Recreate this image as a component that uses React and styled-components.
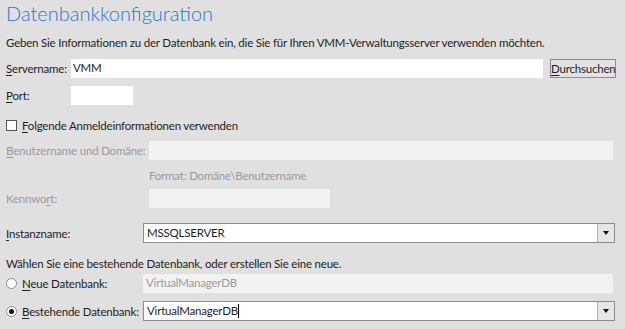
import React from 'react';
import styled, { createGlobalStyle } from 'styled-components';

const Global = createGlobalStyle`
  html, body {
    margin: 0;
    padding: 0;
    background: #e0e0e0;
  }
  body {
    font-family: Lato, "Liberation Sans", sans-serif;
    font-size: 11.5px;
    letter-spacing: -0.2px;
    color: #1e1e1e;
  }
`;

const Page = styled.div`
  width: 625px;
  height: 329px;
  padding: 0 0 0 6px;
  box-sizing: border-box;
  overflow: hidden;
`;

const Title = styled.h1`
  margin: 0;
  height: 30px;
  font-family: Lato, sans-serif;
  font-weight: 300;
  font-size: 20px;
  letter-spacing: 0;
  line-height: 26px;
  color: #2b78cf;
`;

const Text = styled.div`
  height: ${p => p.$h || 16}px;
  margin-top: ${p => p.$top || 0}px;
  line-height: 16px;
  padding-left: ${p => p.$indent || 0}px;
  color: ${p => (p.$muted ? '#9a9a9a' : '#1e1e1e')};
  white-space: nowrap;
`;

const Row = styled.div`
  display: flex;
  align-items: center;
  height: ${p => p.$h || 19}px;
  margin-top: ${p => p.$top || 0}px;
`;

const Label = styled.label`
  width: ${p => p.$w}px;
  flex: none;
  color: ${p => (p.$disabled ? '#9a9a9a' : '#1e1e1e')};
  white-space: nowrap;
  display: flex;
  align-items: center;
  gap: 5px;
`;

const Key = styled.span`
  text-decoration: underline;
  text-underline-offset: 2px;
`;

const Input = styled.div`
  width: ${p => p.$w}px;
  height: 19px;
  box-sizing: border-box;
  background: ${p => (p.$disabled ? '#f2f2f2' : '#ffffff')};
  color: ${p => (p.$disabled ? '#9a9a9a' : '#1e1e1e')};
  padding-left: ${p => (p.$disabled ? 3 : 2)}px;
  line-height: 18px;
  white-space: nowrap;
`;

const Button = styled.button`
  margin-left: 7px;
  width: 66px;
  height: 19px;
  padding: 0;
  box-sizing: border-box;
  border: 1px solid #8c8c8c;
  background: #e3e3e3;
  font: inherit;
  letter-spacing: inherit;
  color: #1e1e1e;
  line-height: 16px;
  text-align: center;
`;

const Select = styled.div`
  display: flex;
  width: 472px;
  height: 20px;
  box-sizing: border-box;
  border: 1px solid #8c8c8c;
  background: #fff;
`;

const SelectValue = styled.div`
  flex: 1;
  padding-left: 3px;
  line-height: 18px;
  white-space: nowrap;
  display: flex;
  align-items: center;
`;

const Caret = styled.span`
  display: inline-block;
  width: 1px;
  height: 14px;
  background: #000;
`;

const Arrow = styled.div`
  width: 16px;
  flex: none;
  border-left: 1px solid #b0b0b0;
  background: #e6e6e6;
  display: flex;
  align-items: center;
  justify-content: center;

  &::after {
    content: '';
    border-left: 3px solid transparent;
    border-right: 3px solid transparent;
    border-top: 4px solid #111;
  }
`;

const Check = styled.span`
  width: 11px;
  height: 11px;
  box-sizing: border-box;
  border: 1px solid #555;
  background: #fff;
  flex: none;
`;

const Radio = styled.span`
  width: 11px;
  height: 11px;
  box-sizing: border-box;
  border: 1px solid #8a8a8a;
  border-radius: 50%;
  background: #fff;
  flex: none;
  display: flex;
  align-items: center;
  justify-content: center;

  &::after {
    content: '';
    display: ${p => (p.$checked ? 'block' : 'none')};
    width: 5px;
    height: 5px;
    border-radius: 50%;
    background: #111;
  }
`;

export default function App() {
  return (
    <Page>
      <Global />
      <Title>Datenbankkonfiguration</Title>
      <Text $top={5}>
        Geben Sie Informationen zu der Datenbank ein, die Sie für Ihren VMM-Verwaltungsserver verwenden möchten.
      </Text>

      <Row $top={8}>
        <Label $w={65}><span><Key>S</Key>ervername:</span></Label>
        <Input $w={472}>VMM</Input>
        <Button><Key>D</Key>urchsuchen</Button>
      </Row>
      <Row $top={8}>
        <Label $w={65}><span><Key>P</Key>ort:</span></Label>
        <Input $w={62} />
      </Row>

      <Row $top={15} $h={11}>
        <Label $w={400}>
          <Check />
          <span><Key>F</Key>olgende Anmeldeinformationen verwenden</span>
        </Label>
      </Row>

      <Row $top={10}>
        <Label $w={143} $disabled><span><Key>B</Key>enutzername und Domäne:</span></Label>
        <Input $w={464} $disabled />
      </Row>
      <Text $top={8} $h={20} $indent={143} $muted>Format: Domäne\Benutzername</Text>
      <Row $top={1}>
        <Label $w={143} $disabled><span>Kennwo<Key>r</Key>t:</span></Label>
        <Input $w={181} $disabled />
      </Row>

      <Row $top={15} $h={20}>
        <Label $w={137}><span><Key>I</Key>nstanzname:</span></Label>
        <Select>
          <SelectValue>MSSQLSERVER</SelectValue>
          <Arrow />
        </Select>
      </Row>

      <Text $top={13}>Wählen Sie eine bestehende Datenbank, oder erstellen Sie eine neue.</Text>

      <Row $top={1} $h={20}>
        <Label $w={137}>
          <Radio />
          <span><Key>N</Key>eue Datenbank:</span>
        </Label>
        <Input $w={470} $disabled>VirtualManagerDB</Input>
      </Row>
      <Row $top={8} $h={20}>
        <Label $w={137}>
          <Radio $checked />
          <span><Key>B</Key>estehende Datenbank:</span>
        </Label>
        <Select>
          <SelectValue>VirtualManagerDB<Caret /></SelectValue>
          <Arrow />
        </Select>
      </Row>
    </Page>
  );
}
